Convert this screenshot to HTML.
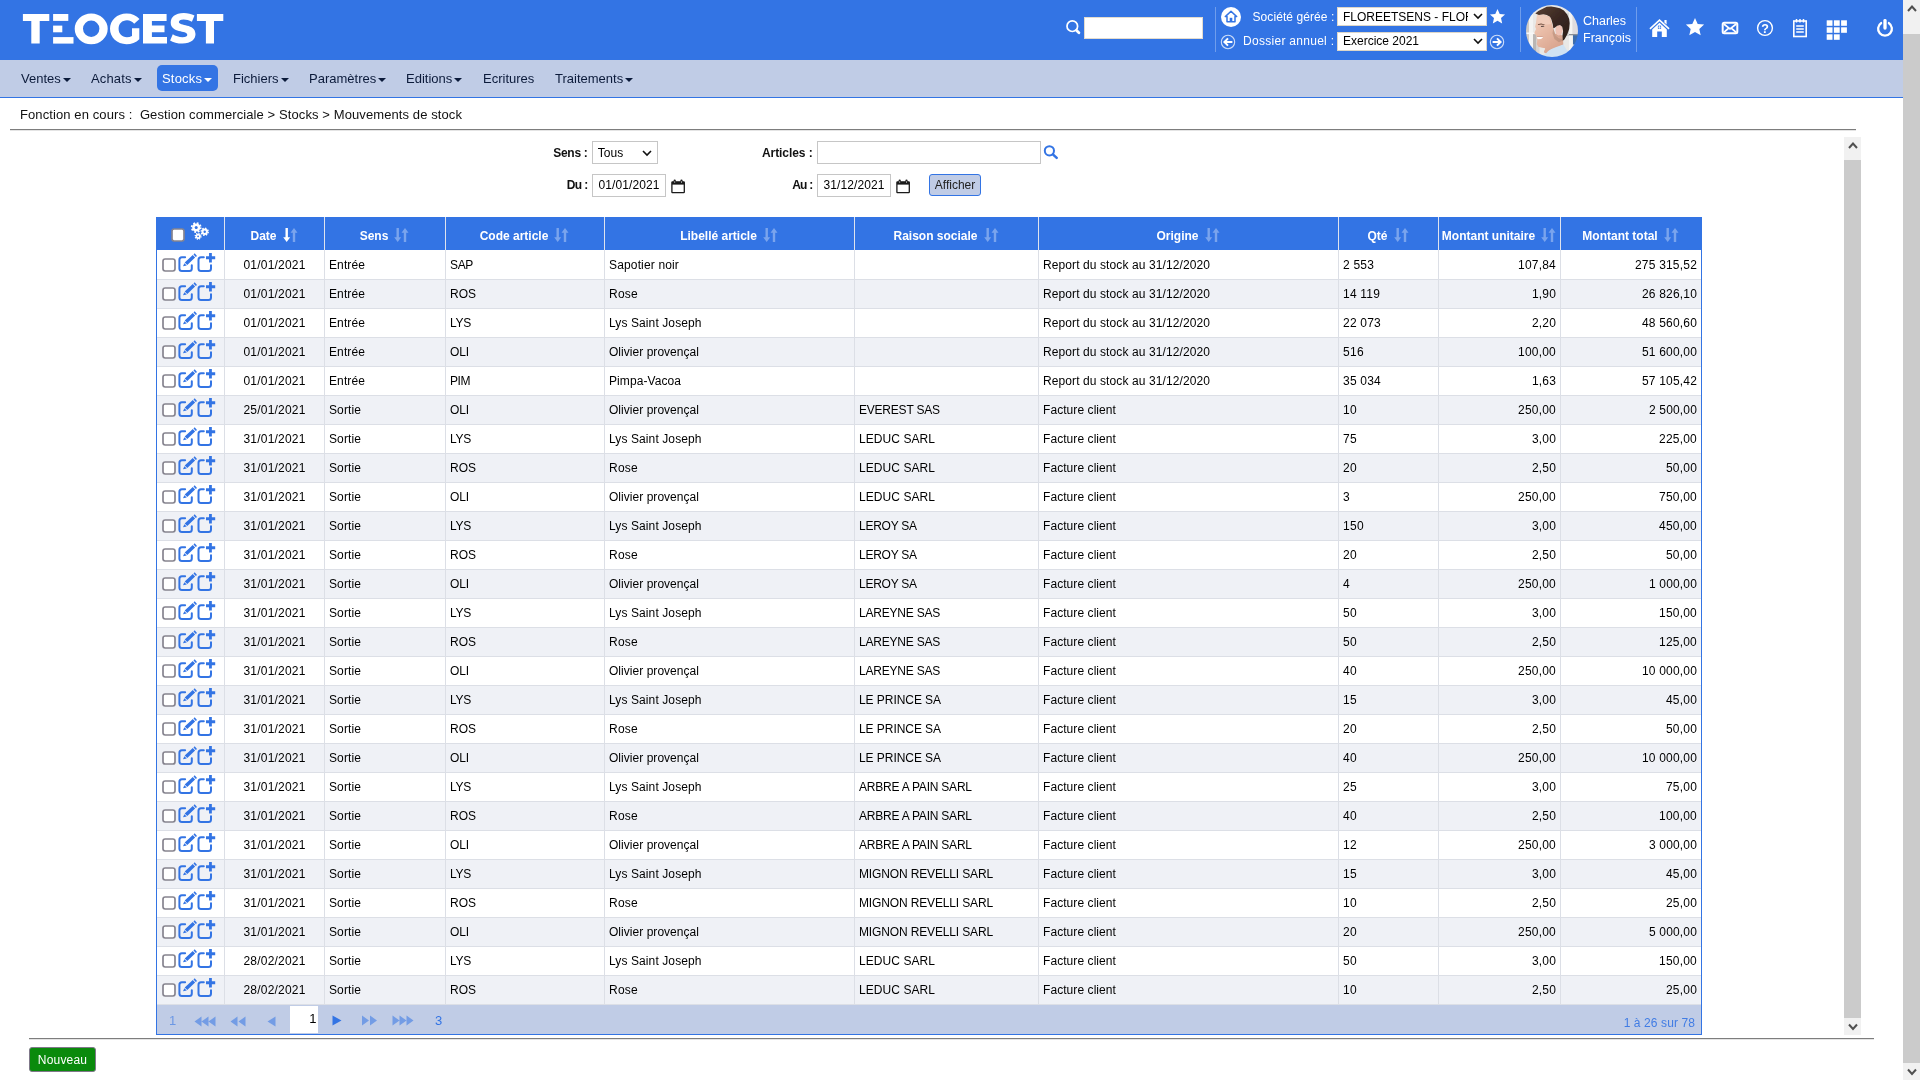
<!DOCTYPE html>
<html lang="fr"><head><meta charset="utf-8"><title>Teogest - Mouvements de stock</title>
<style>
*{box-sizing:border-box}
html,body{margin:0;padding:0}
body{width:1920px;height:1080px;overflow:hidden;position:relative;background:#fff;font-family:"Liberation Sans",sans-serif;font-size:13px;color:#000}
.abs{position:absolute}
#hdr{position:absolute;left:0;top:0;width:1903px;height:60px;background:#3374e4}
#nav{position:absolute;left:0;top:60px;width:1903px;height:38px;background:#c0cce6;border-bottom:1px solid #3374e4}
.ni{position:absolute;top:5px;height:26px;line-height:27.500px;font-size:13px;color:#0b1a3a;padding:0 6px 0 5px;border-radius:5px;white-space:nowrap}
.ni.on{background:#3374e4;color:#fff}
.car{display:inline-block;width:0;height:0;margin-left:2px;vertical-align:middle;border-top:4px solid currentColor;border-left:4px solid transparent;border-right:4px solid transparent;position:relative;top:0px}
#bc{position:absolute;left:20px;top:107px;height:16px;line-height:16px;font-size:13px;white-space:pre;color:#111;letter-spacing:.1px}
.hr{position:absolute;height:2px;border-top:1px solid #7d7d7d;border-bottom:1px solid #e4e4e4}
.lbl{position:absolute;font-size:12px;font-weight:bold;text-align:right;height:22px;line-height:23px;white-space:nowrap;color:#111;letter-spacing:0;margin-left:.6px}
.inp{position:absolute;height:23px;border:1px solid #c6c6c6;background:#fff;font-size:12px;line-height:21px;padding:0 0 0 5.500px;white-space:nowrap;color:#000;letter-spacing:.1px}
.hsel{position:absolute;height:19px;border:1px solid #ddd6c8;background:#fff;font-size:12px;line-height:17px;padding:0 0 0 5px;white-space:nowrap;overflow:hidden;color:#000;border-radius:0}
.htxt{position:absolute;color:#fff;font-size:12px;white-space:nowrap;height:16px;line-height:16px}
.vsep{position:absolute;top:7px;width:1px;height:45px;background:#6f9dec}
#grid{position:absolute;left:156px;top:217px;width:1546px;height:818px;border:1px solid #3374e4;border-top:0;background:#fff;font-size:12px}
#ghead{position:absolute;left:0;top:0;width:1544px;height:33px;background:#3374e4}
.hc{position:absolute;top:0;height:33px;border-right:1px solid #dfe3ee;color:#fff;font-weight:bold;font-size:12px;line-height:33px;text-align:center;white-space:nowrap}
.hc:last-child{border-right:0}
.ht{display:inline-block;vertical-align:top;margin-top:3px}
.srt{display:inline-block;vertical-align:top;margin:10px 0 0 6px}
.srt path{fill:#fff;fill-opacity:.35}
.srt.act .dn{fill-opacity:1}
.gr{position:absolute;left:0;width:1544px;height:29px;background:#fff;border-top:1px solid #dcdfe6}
.gr.alt{background:#eff1f6}
.gr.first{border-top-color:#fff}
.c{position:absolute;top:-1px;height:29px;line-height:30px;border-right:1px solid #dcdfe6;padding:0 4px;white-space:nowrap;overflow:hidden;text-align:left}
.c.ar{text-align:right}
.c.ac{text-align:center}
.gr .c:last-child{border-right:0}
.cb{position:absolute;width:14px;height:14px}
#pager{position:absolute;left:0;top:787px;width:1544px;height:30px;border-top:1px solid #dcdfe6;background:#c0cce6;color:#3374e4;font-size:13px}
#pager .p{position:absolute;top:0;height:29px;line-height:30px;white-space:nowrap}
#pager svg{position:absolute}
#sb2{position:absolute;left:1844px;top:137px;width:17px;height:898px;background:#f1f1f1}
#sb1{position:absolute;left:1903px;top:0;width:17px;height:1080px;background:#f1f1f1}
.thumb{position:absolute;left:0;width:17px;background:#cbcbcb}
.btn-new{position:absolute;left:29px;top:1047px;width:67px;height:25px;background:#0a8a0c;border:1px solid #80788a;border-radius:3px;color:#fff;font-size:12px;line-height:24.500px;text-align:center;letter-spacing:.2px}
.btn-aff{position:absolute;left:929px;top:174px;width:52px;height:22px;background:#c0cce6;border:1px solid #3374e4;border-radius:3px;color:#222;font-size:12px;line-height:20px;text-align:center}
.st{display:block;width:125px;overflow:hidden;white-space:nowrap}
#wrap{position:absolute;left:0;top:0;width:1920px;height:1080px;will-change:transform}

</style></head>
<body>
<div id="wrap">
<div id="hdr">
<svg class="abs" style="left:22px;top:13px" width="203" height="32" viewBox="22 13 203 32">
<g fill="#fff">
<path d="M22.9 14h26.4v6.9H39.7V43.6H31.3V20.9H22.9z"/>
<rect x="53.1" y="14" width="15.2" height="6.9"/><rect x="53.1" y="25.6" width="9.2" height="6.7"/><rect x="53.1" y="37.1" width="20.4" height="6.5"/>
<path fill-rule="evenodd" d="M91.2 13.4a16.5 15.4 0 1 0 0 30.8a16.5 15.4 0 1 0 0-30.8zM91.2 20.6a8.2 8.2 0 1 1 0 16.4a8.2 8.2 0 1 1 0-16.4z"/>
<path d="M139.3 28.3v10.9c-3.3 3.2-7.9 5-12.8 5-9.4 0-16.5-6.6-16.5-15.4s7.1-15.4 16.6-15.4c5.3 0 9.9 2 12.9 5.6l-5.3 4.7c-1.900-2.200-4.300-3.400-7.200-3.400-5 0-8.400 3.500-8.400 8.500 0 4.900 3.400 8.500 8.300 8.500 1.800 0 3.500-.4 5.100-1.300V28.300z"/>
<path d="M143 14h23.600v6.900H151.900v4.700h12.600v6.700H151.900v4.800h15.100v6.500H143z"/>
<path d="M170.100 40.400l2.700-6.100c2.600 1.700 6.300 2.900 9.700 2.900 3.400 0 4.800-1 4.800-2.400 0-4.700-16.600-1.300-16.600-12.200 0-5.300 4.300-9.600 13.100-9.600 3.800 0 7.800.9 10.700 2.600l-2.600 6.100c-2.800-1.500-5.600-2.300-8.200-2.300-3.500 0-4.800 1.200-4.800 2.700 0 4.500 16.600 1.200 16.600 12 0 5.100-4.300 9.500-13.100 9.500-4.800 0-9.600-1.300-12.300-3.200z"/>
<path d="M196.900 14h26.400v6.900H214V43.600H205.900V20.900H196.900z"/>
</g></svg>
<!-- search -->
<svg class="abs" style="left:1064px;top:19px" width="18" height="18" viewBox="0 0 18 18"><circle cx="8.300" cy="7.200" r="5.300" fill="none" stroke="#fff" stroke-width="1.700"/><path d="M12.600 11.500L14.900 13.700" stroke="#fff" stroke-width="2.800" stroke-linecap="round"/></svg>
<div class="abs" style="left:1084px;top:17px;width:119px;height:22px;background:#fff;border:1px solid #e3dccf"></div>
<div class="vsep" style="left:1215px"></div>
<svg class="abs" style="left:1220px;top:6px" width="22" height="22" viewBox="0 0 22 22"><circle cx="11" cy="11" r="10" fill="#fff"/><path d="M11 5.300L5.300 10.600h1.700v5.200h8v-5.200h1.700z" fill="none" stroke="#3374e4" stroke-width="1.500" stroke-linejoin="round"/><rect x="9.700" y="11.800" width="2.600" height="4" fill="#3374e4"/></svg>
<div class="htxt" style="left:1134.300px;width:200px;text-align:right;top:9px;letter-spacing:.07px">Société gérée :</div>
<div class="hsel" style="left:1337px;top:7px;width:150px;line-height:19px"><span class="st">FLOREETSENS - FLOREETSENS</span><svg class="abs" style="right:3px;top:5px" width="10" height="7" viewBox="0 0 10 7"><path d="M1 1l4 4 4-4" fill="none" stroke="#111" stroke-width="1.600"/></svg></div>
<svg class="abs" style="left:1489.300px;top:8.300px" width="17" height="17" viewBox="0 0 16 16"><path d="M8 1l2.100 4.700 5 .500-3.800 3.300 1.100 5L8 11.900 3.600 14.500l1.100-5L.9 6.200l5-.5z" fill="#fff"/></svg>
<svg class="abs" style="left:1220px;top:34px" width="16" height="16" viewBox="0 0 16 16"><circle cx="8" cy="8" r="6.700" fill="none" stroke="#fff" stroke-opacity=".75" stroke-width="1.100"/><path d="M12.400 8H4.800M8 4.400L4.400 8l3.600 3.600" fill="none" stroke="#fff" stroke-width="2"/></svg>
<div class="htxt" style="left:1134.300px;width:200px;text-align:right;top:33px;letter-spacing:.28px">Dossier annuel :</div>
<div class="hsel" style="left:1337px;top:32px;width:150px"><span class="st">Exercice 2021</span><svg class="abs" style="right:3px;top:5px" width="10" height="7" viewBox="0 0 10 7"><path d="M1 1l4 4 4-4" fill="none" stroke="#111" stroke-width="1.600"/></svg></div>
<svg class="abs" style="left:1489px;top:34px" width="16" height="16" viewBox="0 0 16 16"><circle cx="8" cy="8" r="6.700" fill="none" stroke="#fff" stroke-opacity=".75" stroke-width="1.100"/><path d="M3.600 8h7.600M8 4.400L11.600 8l-3.600 3.600" fill="none" stroke="#fff" stroke-width="2"/></svg>
<div class="vsep" style="left:1520px"></div>
<!-- avatar -->
<svg class="abs" style="left:1526px;top:5px" width="52" height="52" viewBox="0 0 52 52"><defs><clipPath id="av"><circle cx="26" cy="26" r="26"/></clipPath><filter id="bl" x="-10%" y="-10%" width="120%" height="120%"><feGaussianBlur stdDeviation="0.65"/></filter><linearGradient id="gh" x1="0" y1="0" x2="1" y2="1"><stop offset="0" stop-color="#5a4134"/><stop offset=".5" stop-color="#3a2822"/><stop offset="1" stop-color="#2b1e1b"/></linearGradient><linearGradient id="gf" x1="0" y1="0" x2=".6" y2="1"><stop offset="0" stop-color="#f3d2c0"/><stop offset=".45" stop-color="#e9bca7"/><stop offset="1" stop-color="#d9a48e"/></linearGradient></defs><g clip-path="url(#av)"><g filter="url(#bl)"><rect x="-2" y="-2" width="56" height="56" fill="#e9e8e6"/><rect x="0" y="0" width="3.500" height="56" fill="#cfcac4"/><rect x="3" y="0" width="4" height="56" fill="#f3f3f2"/><rect x="7" y="29" width="3.500" height="26" fill="#b9b6b4"/><rect x="10.500" y="29" width="3" height="26" fill="#d8d3d2"/><rect x="0" y="27.500" width="10" height="1.600" fill="#f8f8f8"/><rect x="43" y="0" width="3.500" height="56" fill="#f4f4f3"/><rect x="46.500" y="0" width="6" height="29" fill="#dfdcde"/><rect x="47" y="29.500" width="6" height="10" fill="#3d6cab"/><rect x="38" y="29" width="14" height="1.300" fill="#8a8f96"/><rect x="40" y="8" width="3" height="22" fill="#d9dad8"/><path d="M27.3 28.3L36.8 30.6L37.3 39.4L27.3 43.3L20.1 48.6L17.9 47.2L19.6 42.8z" fill="#d7a48e"/><path d="M17.9 50.6L20.1 47.2L26.8 42.8L37.1 38.9L40.1 43.9L42.9 47.2L36.2 52.8L21.8 52.8z" fill="#cfe2f3"/><path d="M10.9 10.0L17.3 9.2L24.0 11.7L27.3 23.3L29.6 30.6L36.5 33.9L37.1 39.4L29.6 42.2L22.9 45.0L20.1 48.3L18.4 46.7L19.3 43.3L16.2 42.7L12.3 41.7L10.7 38.9L11.3 35.6L10.6 33.3L10.7 31.7L9.8 30.1L8.3 28.3L8.6 26.9L10.1 23.9L9.1 21.7L10.1 17.2z" fill="url(#gf)"/><path d="M11.8 11.1L17.9 10.3L22.9 12.8L25.1 18.9L20.7 19.4L10.7 18.3z" fill="#f1cdbb"/><path d="M30.1 21.1L34.0 20.0L36.3 21.7L36.8 26.1L35.1 30.0L32.3 30.6L30.1 28.9L29.3 25.0z" fill="#efc3b6"/><path d="M27.3 23.3L29.6 30.6L32.9 33.3L36.5 33.9L36.8 35.8L32.9 37.2L28.4 33.9L26.5 28.3z" fill="#b08874" fill-opacity=".55"/><path d="M9.3 8.6L12.3 6.1L16.2 3.9L20.7 1.7L25.1 1.6L29.6 2.2L34.0 3.3L37.9 5.6L41.2 9.4L43.2 13.9L43.7 18.3L43.2 23.9L41.2 29.4L38.4 34.4L36.8 35.8L36.5 30.6L37.1 26.1L36.2 21.7L34.0 20.0L31.2 20.8L28.7 22.8L27.3 23.3L26.8 19.4L25.4 14.4L24.0 11.7L20.7 10.0L17.3 9.2L12.9 9.9z" fill="url(#gh)"/><path d="M10.9 32.1L16.2 31.4L17.1 32.2L15.1 33.9L11.5 34.3z" fill="#fdfdfd"/><path d="M11.8 19.3L15.1 18.6L18.7 19.4L18.4 20.1L15.1 19.6L12.1 20.1z" fill="#6b4a3c"/><path d="M14.8 21.0L17.9 20.7L18.4 21.6L15.4 22.0z" fill="#4a3a38"/><path d="M10.7 31.4L16.2 31.0L17.3 31.8L16.2 31.7L10.9 32.1z" fill="#c98f7c"/></g></g></svg>
<div class="htxt" style="left:1583px;top:13px;font-size:12.500px">Charles</div>
<div class="htxt" style="left:1583px;top:30px;font-size:12.500px">François</div>
<div class="vsep" style="left:1636px"></div>
<!-- icons -->
<svg class="abs" style="left:1649px;top:18px" width="21" height="20" viewBox="0 0 21 20"><path d="M10.500 1L0.400 10.300l1.100 1.200L10.500 3.300l9 8.200 1.100-1.200z" fill="#fff"/><path d="M15.400 2h2.200v4.600l-2.200-2z" fill="#fff"/><path d="M3.200 11.400L10.500 4.700l7.300 6.700V19h-5v-5.400H8.200V19H3.200z" fill="#fff"/><rect x="8.900" y="7.600" width="3.200" height="3.200" fill="#3374e4"/><path d="M10.500 7.600v3.200M8.900 9.200h3.200" stroke="#fff" stroke-width=".7"/></svg>
<svg class="abs" style="left:1685px;top:17px" width="20" height="20" viewBox="0 0 20 20"><path d="M10 1l2.700 6 6.400.6-4.800 4.300 1.400 6.400L10 15l-5.700 3.300 1.400-6.400L.9 7.600l6.400-.6z" fill="#fff"/></svg>
<svg class="abs" style="left:1721px;top:21px" width="18" height="14" viewBox="0 0 18 14"><rect x="1.700" y="1.700" width="14.600" height="10.600" rx="1.500" fill="none" stroke="#fff" stroke-width="2"/><path d="M2.800 3l6.200 5 6.200-5M2.800 11.300l4.500-3.800M15.200 11.300l-4.500-3.800" fill="none" stroke="#fff" stroke-width="1.700"/></svg>
<svg class="abs" style="left:1756px;top:19px" width="18" height="18" viewBox="0 0 18 18"><circle cx="9" cy="9" r="7.400" fill="none" stroke="#fff" stroke-width="1.400"/><text x="9" y="13.500" text-anchor="middle" font-family="Liberation Sans" font-weight="bold" font-size="12.500" fill="#fff">?</text></svg>
<svg class="abs" style="left:1792px;top:18px" width="16" height="20" viewBox="0 0 16 20"><rect x="1.800" y="3" width="12.400" height="15.500" fill="none" stroke="#fff" stroke-width="1.600"/><path d="M4.500 1v3.400M8 1v3.400M11.500 1v3.400" stroke="#fff" stroke-width="1.500"/><path d="M4.200 8h7.600M4.200 11h7.600M4.200 14h7.600" stroke="#fff" stroke-width="1.500"/></svg>
<svg class="abs" style="left:1826px;top:20px" width="22" height="21" viewBox="0 0 22 21"><g fill="#fff"><rect x="0.700" y="0.300" width="5.800" height="5.500"/><rect x="7.900" y="0.300" width="5.800" height="5.500"/><rect x="15.100" y="0.300" width="5.800" height="5.500"/><rect x="0.700" y="7.300" width="5.800" height="5.500"/><rect x="7.900" y="7.300" width="5.800" height="5.500"/><rect x="15.100" y="7.300" width="5.800" height="5.500"/><rect x="0.700" y="14.300" width="5.800" height="5.500"/><rect x="7.900" y="14.300" width="5.800" height="5.500"/></g></svg>
<svg class="abs" style="left:1876px;top:19px" width="18" height="19" viewBox="0 0 18 19"><path d="M5.300 4A6.900 6.900 0 1 0 12.700 4" fill="none" stroke="#fff" stroke-width="2.300" stroke-linecap="round"/><path d="M9 1.600v7.400" stroke="#3374e4" stroke-width="5.200" stroke-linecap="round"/><path d="M9 1.600v7.400" stroke="#fff" stroke-width="3.300" stroke-linecap="round"/></svg>
</div>
<div id="nav">
<div class="ni" style="left:16px">Ventes<i class="car"></i></div>
<div class="ni" style="left:86px;letter-spacing:.15px">Achats<i class="car"></i></div>
<div class="ni on" style="left:157px;letter-spacing:.2px">Stocks<i class="car"></i></div>
<div class="ni" style="left:228px">Fichiers<i class="car"></i></div>
<div class="ni" style="left:304px">Paramètres<i class="car"></i></div>
<div class="ni" style="left:401px">Editions<i class="car"></i></div>
<div class="ni" style="left:478px">Ecritures</div>
<div class="ni" style="left:550px">Traitements<i class="car"></i></div>
</div>
<div id="bc">Fonction en cours :  Gestion commerciale &gt; Stocks &gt; Mouvements de stock</div>
<div class="hr" style="left:10px;top:129px;width:1846px"></div>
<!-- filters -->
<div class="lbl" style="left:487px;width:100px;top:142px;letter-spacing:-.28px">Sens :</div>
<div class="inp" style="left:592px;top:141px;width:66px;line-height:23px;letter-spacing:0;padding-left:4.800px">Tous<svg class="abs" style="right:5px;top:8px" width="10" height="7" viewBox="0 0 10 7"><path d="M1 1l4 4 4-4" fill="none" stroke="#111" stroke-width="1.600"/></svg></div>
<div class="lbl" style="left:712px;width:100px;top:142px;letter-spacing:-.07px">Articles :</div>
<div class="inp" style="left:817px;top:141px;width:224px"></div>
<svg class="abs" style="left:1043px;top:144px" width="16" height="17" viewBox="0 0 16 17"><circle cx="6.400" cy="6.800" r="4.600" fill="none" stroke="#3374e4" stroke-width="2"/><path d="M9.900 10.300L13.700 13.900" stroke="#3374e4" stroke-width="2.500" stroke-linecap="round"/></svg>
<div class="lbl" style="left:487px;width:100px;top:174px;letter-spacing:-.6px">Du :</div>
<div class="inp" style="left:592px;top:174px;width:74px">01/01/2021</div>
<svg class="abs cal" style="left:670px;top:177.600px" width="16" height="16" viewBox="0 0 16 16"><rect x="1.900" y="3.900" width="12.400" height="10.800" rx=".6" fill="#fff" stroke="#1a1a1a" stroke-width="1.300"/><rect x="1.900" y="3.900" width="12.400" height="2.700" fill="#1a1a1a"/><path d="M4.700 2.600v2M11.500 2.600v2" stroke="#1a1a1a" stroke-width="2.200" stroke-linecap="round"/><path d="M4.700 3.300v1.500M11.500 3.300v1.500" stroke="#ddd" stroke-width=".8"/></svg>
<div class="lbl" style="left:712px;width:100px;top:174px;letter-spacing:-.73px">Au :</div>
<div class="inp" style="left:817px;top:174px;width:74px">31/12/2021</div>
<svg class="abs cal" style="left:895px;top:177.600px" width="16" height="16" viewBox="0 0 16 16"><rect x="1.900" y="3.900" width="12.400" height="10.800" rx=".6" fill="#fff" stroke="#1a1a1a" stroke-width="1.300"/><rect x="1.900" y="3.900" width="12.400" height="2.700" fill="#1a1a1a"/><path d="M4.700 2.600v2M11.500 2.600v2" stroke="#1a1a1a" stroke-width="2.200" stroke-linecap="round"/><path d="M4.700 3.300v1.500M11.500 3.300v1.500" stroke="#ddd" stroke-width=".8"/></svg>
<div class="btn-aff">Afficher</div>
<div id="grid">
<div id="ghead">
<div class="hc" style="left:0;width:68px"><svg class="cb" style="left:14.200px;top:11.200px" viewBox="0 0 14 14"><rect x="1" y="1" width="12" height="12" rx="2.200" fill="#fff" stroke="#86848f" stroke-width="1.700"/></svg><svg class="abs" style="left:32.300px;top:3.200px" width="20" height="20" viewBox="0 0 20 20"><g fill="#fff" stroke="#fff"><circle cx="7.200" cy="7.500" r="4" stroke="none"/><circle cx="7.200" cy="7.500" r="4.500" fill="none" stroke-width="1.800" stroke-dasharray="1.770 1.770"/><circle cx="15.700" cy="11.800" r="3.200" stroke="none"/><circle cx="15.700" cy="11.800" r="3.500" fill="none" stroke-width="1.500" stroke-dasharray="1.370 1.370"/><circle cx="9.100" cy="16.300" r="2.600" stroke="none"/><circle cx="9.100" cy="16.300" r="2.900" fill="none" stroke-width="1.300" stroke-dasharray="1.140 1.140"/></g><circle cx="7.200" cy="7.500" r="1.500" fill="#3374e4"/><circle cx="15.700" cy="11.800" r="1.200" fill="#3374e4"/><circle cx="9.100" cy="16.300" r="0.900" fill="#3374e4"/></svg></div>
<div class="hc" style="left:68px;width:100px"><span class="ht">Date</span><svg class="srt act" width="16" height="16" viewBox="0 0 16 16"><path class="dn" d="M2.5 1h2.4v9.2h2.3L3.7 15 0.2 10.2h2.3z"/><path class="up" d="M9.800 15h2.400V5.800h2.300L11 1 7.500 5.800h2.300z"/></svg></div>
<div class="hc" style="left:168px;width:121px"><span class="ht">Sens</span><svg class="srt" width="16" height="16" viewBox="0 0 16 16"><path class="dn" d="M2.5 1h2.4v9.2h2.3L3.7 15 0.2 10.2h2.3z"/><path class="up" d="M9.800 15h2.400V5.800h2.300L11 1 7.500 5.800h2.300z"/></svg></div>
<div class="hc" style="left:289px;width:159px"><span class="ht">Code article</span><svg class="srt" width="16" height="16" viewBox="0 0 16 16"><path class="dn" d="M2.5 1h2.4v9.2h2.3L3.7 15 0.2 10.2h2.3z"/><path class="up" d="M9.800 15h2.400V5.800h2.300L11 1 7.500 5.800h2.300z"/></svg></div>
<div class="hc" style="left:448px;width:250px"><span class="ht">Libellé article</span><svg class="srt" width="16" height="16" viewBox="0 0 16 16"><path class="dn" d="M2.5 1h2.4v9.2h2.3L3.7 15 0.2 10.2h2.3z"/><path class="up" d="M9.800 15h2.400V5.800h2.300L11 1 7.500 5.800h2.300z"/></svg></div>
<div class="hc" style="left:698px;width:184px"><span class="ht">Raison sociale</span><svg class="srt" width="16" height="16" viewBox="0 0 16 16"><path class="dn" d="M2.5 1h2.4v9.2h2.3L3.7 15 0.2 10.2h2.3z"/><path class="up" d="M9.800 15h2.400V5.800h2.300L11 1 7.500 5.800h2.300z"/></svg></div>
<div class="hc" style="left:882px;width:300px"><span class="ht">Origine</span><svg class="srt" width="16" height="16" viewBox="0 0 16 16"><path class="dn" d="M2.5 1h2.4v9.2h2.3L3.7 15 0.2 10.2h2.3z"/><path class="up" d="M9.800 15h2.400V5.800h2.300L11 1 7.500 5.800h2.300z"/></svg></div>
<div class="hc" style="left:1182px;width:100px"><span class="ht">Qté</span><svg class="srt" width="16" height="16" viewBox="0 0 16 16"><path class="dn" d="M2.5 1h2.4v9.2h2.3L3.7 15 0.2 10.2h2.3z"/><path class="up" d="M9.800 15h2.400V5.800h2.300L11 1 7.500 5.800h2.300z"/></svg></div>
<div class="hc" style="left:1282px;width:122px"><span class="ht">Montant unitaire</span><svg class="srt" width="16" height="16" viewBox="0 0 16 16"><path class="dn" d="M2.5 1h2.4v9.2h2.3L3.7 15 0.2 10.2h2.3z"/><path class="up" d="M9.800 15h2.400V5.800h2.300L11 1 7.500 5.800h2.300z"/></svg></div>
<div class="hc" style="left:1404px;width:140px"><span class="ht">Montant total</span><svg class="srt" width="16" height="16" viewBox="0 0 16 16"><path class="dn" d="M2.5 1h2.4v9.2h2.3L3.7 15 0.2 10.2h2.3z"/><path class="up" d="M9.800 15h2.400V5.800h2.300L11 1 7.500 5.800h2.300z"/></svg></div>
</div>
<div class="gr first" style="top:33px">
<div class="c" style="left:0;width:68px"><svg class="cb" style="left:5.150px;top:8.100px" viewBox="0 0 14 14"><rect x="1" y="1" width="12" height="12" rx="2.200" fill="#fff" stroke="#86848f" stroke-width="1.700"/></svg><svg class="abs" style="left:21px;top:2px" width="20" height="21" viewBox="0 0 20 21"><path d="M7.100 5.200H3.900a2.500 2.500 0 0 0-2.500 2.500v8.700a2.500 2.500 0 0 0 2.500 2.500h7.400a2.500 2.500 0 0 0 2.500-2.500v-3.200" fill="none" stroke="#3374e4" stroke-width="2" stroke-linecap="round"/><path d="M6.700 10.500L14.800 3l2.300 2.600-7.800 7.500zM6.400 11.200l2.400 2.400-3.800.6zM15.500 2.400l1.200-1.100 2.300 2.600-1.200 1.100z" fill="#3374e4"/></svg><svg class="abs" style="left:40px;top:2px" width="20" height="21" viewBox="0 0 20 21"><path d="M6.800 5.200H4a2.500 2.500 0 0 0-2.500 2.500v8.700a2.500 2.500 0 0 0 2.500 2.500h7.500a2.500 2.500 0 0 0 2.500-2.500v-3.200" fill="none" stroke="#3374e4" stroke-width="2" stroke-linecap="round"/><path d="M9 5.750h9.200M13.450 0.900v9.600" stroke="#3374e4" stroke-width="2.800" fill="none"/></svg></div>
<div class="c ac" style="left:68px;width:100px"><span style="letter-spacing:0.194px">01/01/2021</span></div>
<div class="c al" style="left:168px;width:121px"><span style="letter-spacing:0.107px">Entrée</span></div>
<div class="c al" style="left:289px;width:159px"><span style="letter-spacing:-0.337px">SAP</span></div>
<div class="c al" style="left:448px;width:250px"><span style="letter-spacing:0.151px">Sapotier noir</span></div>
<div class="c al" style="left:698px;width:184px"></div>
<div class="c al" style="left:882px;width:300px"><span style="letter-spacing:0.099px">Report du stock au 31/12/2020</span></div>
<div class="c al" style="left:1182px;width:100px"><span style="letter-spacing:0.194px">2 553</span></div>
<div class="c ar" style="left:1282px;width:122px"><span style="letter-spacing:0.216px">107,84</span></div>
<div class="c ar" style="left:1404px;width:140px"><span style="letter-spacing:0.194px">275 315,52</span></div>
</div>
<div class="gr alt" style="top:62px">
<div class="c" style="left:0;width:68px"><svg class="cb" style="left:5.150px;top:8.100px" viewBox="0 0 14 14"><rect x="1" y="1" width="12" height="12" rx="2.200" fill="#fff" stroke="#86848f" stroke-width="1.700"/></svg><svg class="abs" style="left:21px;top:2px" width="20" height="21" viewBox="0 0 20 21"><path d="M7.100 5.200H3.900a2.500 2.500 0 0 0-2.500 2.500v8.700a2.500 2.500 0 0 0 2.500 2.500h7.400a2.500 2.500 0 0 0 2.500-2.500v-3.200" fill="none" stroke="#3374e4" stroke-width="2" stroke-linecap="round"/><path d="M6.700 10.500L14.800 3l2.300 2.600-7.800 7.500zM6.400 11.200l2.400 2.400-3.800.6zM15.500 2.400l1.200-1.100 2.300 2.600-1.200 1.100z" fill="#3374e4"/></svg><svg class="abs" style="left:40px;top:2px" width="20" height="21" viewBox="0 0 20 21"><path d="M6.800 5.200H4a2.500 2.500 0 0 0-2.500 2.500v8.700a2.500 2.500 0 0 0 2.500 2.500h7.500a2.500 2.500 0 0 0 2.500-2.500v-3.200" fill="none" stroke="#3374e4" stroke-width="2" stroke-linecap="round"/><path d="M9 5.750h9.200M13.450 0.900v9.600" stroke="#3374e4" stroke-width="2.800" fill="none"/></svg></div>
<div class="c ac" style="left:68px;width:100px"><span style="letter-spacing:0.194px">01/01/2021</span></div>
<div class="c al" style="left:168px;width:121px"><span style="letter-spacing:0.107px">Entrée</span></div>
<div class="c al" style="left:289px;width:159px">ROS</div>
<div class="c al" style="left:448px;width:250px"><span style="letter-spacing:0.247px">Rose</span></div>
<div class="c al" style="left:698px;width:184px"></div>
<div class="c al" style="left:882px;width:300px"><span style="letter-spacing:0.099px">Report du stock au 31/12/2020</span></div>
<div class="c al" style="left:1182px;width:100px"><span style="letter-spacing:0.216px">14 119</span></div>
<div class="c ar" style="left:1282px;width:122px"><span style="letter-spacing:0.161px">1,90</span></div>
<div class="c ar" style="left:1404px;width:140px"><span style="letter-spacing:0.179px">26 826,10</span></div>
</div>
<div class="gr" style="top:91px">
<div class="c" style="left:0;width:68px"><svg class="cb" style="left:5.150px;top:8.100px" viewBox="0 0 14 14"><rect x="1" y="1" width="12" height="12" rx="2.200" fill="#fff" stroke="#86848f" stroke-width="1.700"/></svg><svg class="abs" style="left:21px;top:2px" width="20" height="21" viewBox="0 0 20 21"><path d="M7.100 5.200H3.900a2.500 2.500 0 0 0-2.500 2.500v8.700a2.500 2.500 0 0 0 2.500 2.500h7.400a2.500 2.500 0 0 0 2.500-2.500v-3.200" fill="none" stroke="#3374e4" stroke-width="2" stroke-linecap="round"/><path d="M6.700 10.500L14.800 3l2.300 2.600-7.800 7.500zM6.400 11.200l2.400 2.400-3.800.6zM15.500 2.400l1.200-1.100 2.300 2.600-1.200 1.100z" fill="#3374e4"/></svg><svg class="abs" style="left:40px;top:2px" width="20" height="21" viewBox="0 0 20 21"><path d="M6.800 5.200H4a2.500 2.500 0 0 0-2.500 2.500v8.700a2.500 2.500 0 0 0 2.500 2.500h7.500a2.500 2.500 0 0 0 2.500-2.500v-3.200" fill="none" stroke="#3374e4" stroke-width="2" stroke-linecap="round"/><path d="M9 5.750h9.200M13.450 0.900v9.600" stroke="#3374e4" stroke-width="2.800" fill="none"/></svg></div>
<div class="c ac" style="left:68px;width:100px"><span style="letter-spacing:0.194px">01/01/2021</span></div>
<div class="c al" style="left:168px;width:121px"><span style="letter-spacing:0.107px">Entrée</span></div>
<div class="c al" style="left:289px;width:159px"><span style="letter-spacing:-0.227px">LYS</span></div>
<div class="c al" style="left:448px;width:250px"><span style="letter-spacing:0.101px">Lys Saint Joseph</span></div>
<div class="c al" style="left:698px;width:184px"></div>
<div class="c al" style="left:882px;width:300px"><span style="letter-spacing:0.099px">Report du stock au 31/12/2020</span></div>
<div class="c al" style="left:1182px;width:100px"><span style="letter-spacing:0.216px">22 073</span></div>
<div class="c ar" style="left:1282px;width:122px"><span style="letter-spacing:0.161px">2,20</span></div>
<div class="c ar" style="left:1404px;width:140px"><span style="letter-spacing:0.179px">48 560,60</span></div>
</div>
<div class="gr alt" style="top:120px">
<div class="c" style="left:0;width:68px"><svg class="cb" style="left:5.150px;top:8.100px" viewBox="0 0 14 14"><rect x="1" y="1" width="12" height="12" rx="2.200" fill="#fff" stroke="#86848f" stroke-width="1.700"/></svg><svg class="abs" style="left:21px;top:2px" width="20" height="21" viewBox="0 0 20 21"><path d="M7.100 5.200H3.900a2.500 2.500 0 0 0-2.500 2.500v8.700a2.500 2.500 0 0 0 2.500 2.500h7.400a2.500 2.500 0 0 0 2.500-2.500v-3.200" fill="none" stroke="#3374e4" stroke-width="2" stroke-linecap="round"/><path d="M6.700 10.500L14.800 3l2.300 2.600-7.800 7.500zM6.400 11.200l2.400 2.400-3.800.6zM15.500 2.400l1.200-1.100 2.300 2.600-1.200 1.100z" fill="#3374e4"/></svg><svg class="abs" style="left:40px;top:2px" width="20" height="21" viewBox="0 0 20 21"><path d="M6.800 5.200H4a2.500 2.500 0 0 0-2.500 2.500v8.700a2.500 2.500 0 0 0 2.500 2.500h7.500a2.500 2.500 0 0 0 2.500-2.500v-3.200" fill="none" stroke="#3374e4" stroke-width="2" stroke-linecap="round"/><path d="M9 5.750h9.200M13.450 0.900v9.600" stroke="#3374e4" stroke-width="2.800" fill="none"/></svg></div>
<div class="c ac" style="left:68px;width:100px"><span style="letter-spacing:0.194px">01/01/2021</span></div>
<div class="c al" style="left:168px;width:121px"><span style="letter-spacing:0.107px">Entrée</span></div>
<div class="c al" style="left:289px;width:159px"><span style="letter-spacing:-0.114px">OLI</span></div>
<div class="c al" style="left:448px;width:250px"><span style="letter-spacing:0.037px">Olivier provençal</span></div>
<div class="c al" style="left:698px;width:184px"></div>
<div class="c al" style="left:882px;width:300px"><span style="letter-spacing:0.099px">Report du stock au 31/12/2020</span></div>
<div class="c al" style="left:1182px;width:100px"><span style="letter-spacing:0.326px">516</span></div>
<div class="c ar" style="left:1282px;width:122px"><span style="letter-spacing:0.216px">100,00</span></div>
<div class="c ar" style="left:1404px;width:140px"><span style="letter-spacing:0.179px">51 600,00</span></div>
</div>
<div class="gr" style="top:149px">
<div class="c" style="left:0;width:68px"><svg class="cb" style="left:5.150px;top:8.100px" viewBox="0 0 14 14"><rect x="1" y="1" width="12" height="12" rx="2.200" fill="#fff" stroke="#86848f" stroke-width="1.700"/></svg><svg class="abs" style="left:21px;top:2px" width="20" height="21" viewBox="0 0 20 21"><path d="M7.100 5.200H3.900a2.500 2.500 0 0 0-2.500 2.500v8.700a2.500 2.500 0 0 0 2.500 2.500h7.400a2.500 2.500 0 0 0 2.500-2.500v-3.200" fill="none" stroke="#3374e4" stroke-width="2" stroke-linecap="round"/><path d="M6.700 10.500L14.800 3l2.300 2.600-7.800 7.500zM6.400 11.200l2.400 2.400-3.800.6zM15.500 2.400l1.200-1.100 2.300 2.600-1.200 1.100z" fill="#3374e4"/></svg><svg class="abs" style="left:40px;top:2px" width="20" height="21" viewBox="0 0 20 21"><path d="M6.800 5.200H4a2.500 2.500 0 0 0-2.500 2.500v8.700a2.500 2.500 0 0 0 2.500 2.500h7.500a2.500 2.500 0 0 0 2.500-2.500v-3.200" fill="none" stroke="#3374e4" stroke-width="2" stroke-linecap="round"/><path d="M9 5.750h9.200M13.450 0.900v9.600" stroke="#3374e4" stroke-width="2.800" fill="none"/></svg></div>
<div class="c ac" style="left:68px;width:100px"><span style="letter-spacing:0.194px">01/01/2021</span></div>
<div class="c al" style="left:168px;width:121px"><span style="letter-spacing:0.107px">Entrée</span></div>
<div class="c al" style="left:289px;width:159px"><span style="letter-spacing:-0.445px">PIM</span></div>
<div class="c al" style="left:448px;width:250px"><span style="letter-spacing:0.088px">Pimpa-Vacoa</span></div>
<div class="c al" style="left:698px;width:184px"></div>
<div class="c al" style="left:882px;width:300px"><span style="letter-spacing:0.099px">Report du stock au 31/12/2020</span></div>
<div class="c al" style="left:1182px;width:100px"><span style="letter-spacing:0.216px">35 034</span></div>
<div class="c ar" style="left:1282px;width:122px"><span style="letter-spacing:0.161px">1,63</span></div>
<div class="c ar" style="left:1404px;width:140px"><span style="letter-spacing:0.179px">57 105,42</span></div>
</div>
<div class="gr alt" style="top:178px">
<div class="c" style="left:0;width:68px"><svg class="cb" style="left:5.150px;top:8.100px" viewBox="0 0 14 14"><rect x="1" y="1" width="12" height="12" rx="2.200" fill="#fff" stroke="#86848f" stroke-width="1.700"/></svg><svg class="abs" style="left:21px;top:2px" width="20" height="21" viewBox="0 0 20 21"><path d="M7.100 5.200H3.900a2.500 2.500 0 0 0-2.500 2.500v8.700a2.500 2.500 0 0 0 2.500 2.500h7.400a2.500 2.500 0 0 0 2.500-2.500v-3.200" fill="none" stroke="#3374e4" stroke-width="2" stroke-linecap="round"/><path d="M6.700 10.500L14.800 3l2.300 2.600-7.800 7.500zM6.400 11.200l2.400 2.400-3.800.6zM15.500 2.400l1.200-1.100 2.300 2.600-1.200 1.100z" fill="#3374e4"/></svg><svg class="abs" style="left:40px;top:2px" width="20" height="21" viewBox="0 0 20 21"><path d="M6.800 5.200H4a2.500 2.500 0 0 0-2.500 2.500v8.700a2.500 2.500 0 0 0 2.500 2.500h7.500a2.500 2.500 0 0 0 2.500-2.500v-3.200" fill="none" stroke="#3374e4" stroke-width="2" stroke-linecap="round"/><path d="M9 5.750h9.200M13.450 0.900v9.600" stroke="#3374e4" stroke-width="2.800" fill="none"/></svg></div>
<div class="c ac" style="left:68px;width:100px"><span style="letter-spacing:0.194px">25/01/2021</span></div>
<div class="c al" style="left:168px;width:121px"><span style="letter-spacing:0.109px">Sortie</span></div>
<div class="c al" style="left:289px;width:159px"><span style="letter-spacing:-0.114px">OLI</span></div>
<div class="c al" style="left:448px;width:250px"><span style="letter-spacing:0.037px">Olivier provençal</span></div>
<div class="c al" style="left:698px;width:184px"><span style="letter-spacing:-0.215px">EVEREST SAS</span></div>
<div class="c al" style="left:882px;width:300px"><span style="letter-spacing:0.069px">Facture client</span></div>
<div class="c al" style="left:1182px;width:100px"><span style="letter-spacing:0.326px">10</span></div>
<div class="c ar" style="left:1282px;width:122px"><span style="letter-spacing:0.216px">250,00</span></div>
<div class="c ar" style="left:1404px;width:140px"><span style="letter-spacing:0.161px">2 500,00</span></div>
</div>
<div class="gr" style="top:207px">
<div class="c" style="left:0;width:68px"><svg class="cb" style="left:5.150px;top:8.100px" viewBox="0 0 14 14"><rect x="1" y="1" width="12" height="12" rx="2.200" fill="#fff" stroke="#86848f" stroke-width="1.700"/></svg><svg class="abs" style="left:21px;top:2px" width="20" height="21" viewBox="0 0 20 21"><path d="M7.100 5.200H3.900a2.500 2.500 0 0 0-2.500 2.500v8.700a2.500 2.500 0 0 0 2.500 2.500h7.400a2.500 2.500 0 0 0 2.500-2.500v-3.200" fill="none" stroke="#3374e4" stroke-width="2" stroke-linecap="round"/><path d="M6.700 10.500L14.800 3l2.300 2.600-7.800 7.500zM6.400 11.200l2.400 2.400-3.800.6zM15.500 2.400l1.200-1.100 2.300 2.600-1.200 1.100z" fill="#3374e4"/></svg><svg class="abs" style="left:40px;top:2px" width="20" height="21" viewBox="0 0 20 21"><path d="M6.800 5.200H4a2.500 2.500 0 0 0-2.500 2.500v8.700a2.500 2.500 0 0 0 2.500 2.500h7.500a2.500 2.500 0 0 0 2.500-2.500v-3.200" fill="none" stroke="#3374e4" stroke-width="2" stroke-linecap="round"/><path d="M9 5.750h9.200M13.450 0.900v9.600" stroke="#3374e4" stroke-width="2.800" fill="none"/></svg></div>
<div class="c ac" style="left:68px;width:100px"><span style="letter-spacing:0.194px">31/01/2021</span></div>
<div class="c al" style="left:168px;width:121px"><span style="letter-spacing:0.109px">Sortie</span></div>
<div class="c al" style="left:289px;width:159px"><span style="letter-spacing:-0.227px">LYS</span></div>
<div class="c al" style="left:448px;width:250px"><span style="letter-spacing:0.101px">Lys Saint Joseph</span></div>
<div class="c al" style="left:698px;width:184px"><span style="letter-spacing:0.064px">LEDUC SARL</span></div>
<div class="c al" style="left:882px;width:300px"><span style="letter-spacing:0.069px">Facture client</span></div>
<div class="c al" style="left:1182px;width:100px"><span style="letter-spacing:0.326px">75</span></div>
<div class="c ar" style="left:1282px;width:122px"><span style="letter-spacing:0.161px">3,00</span></div>
<div class="c ar" style="left:1404px;width:140px"><span style="letter-spacing:0.216px">225,00</span></div>
</div>
<div class="gr alt" style="top:236px">
<div class="c" style="left:0;width:68px"><svg class="cb" style="left:5.150px;top:8.100px" viewBox="0 0 14 14"><rect x="1" y="1" width="12" height="12" rx="2.200" fill="#fff" stroke="#86848f" stroke-width="1.700"/></svg><svg class="abs" style="left:21px;top:2px" width="20" height="21" viewBox="0 0 20 21"><path d="M7.100 5.200H3.900a2.500 2.500 0 0 0-2.500 2.500v8.700a2.500 2.500 0 0 0 2.500 2.500h7.400a2.500 2.500 0 0 0 2.500-2.500v-3.200" fill="none" stroke="#3374e4" stroke-width="2" stroke-linecap="round"/><path d="M6.700 10.500L14.800 3l2.300 2.600-7.800 7.500zM6.400 11.200l2.400 2.400-3.800.6zM15.500 2.400l1.200-1.100 2.300 2.600-1.200 1.100z" fill="#3374e4"/></svg><svg class="abs" style="left:40px;top:2px" width="20" height="21" viewBox="0 0 20 21"><path d="M6.800 5.200H4a2.500 2.500 0 0 0-2.500 2.500v8.700a2.500 2.500 0 0 0 2.500 2.500h7.500a2.500 2.500 0 0 0 2.500-2.500v-3.200" fill="none" stroke="#3374e4" stroke-width="2" stroke-linecap="round"/><path d="M9 5.750h9.200M13.450 0.900v9.600" stroke="#3374e4" stroke-width="2.800" fill="none"/></svg></div>
<div class="c ac" style="left:68px;width:100px"><span style="letter-spacing:0.194px">31/01/2021</span></div>
<div class="c al" style="left:168px;width:121px"><span style="letter-spacing:0.109px">Sortie</span></div>
<div class="c al" style="left:289px;width:159px">ROS</div>
<div class="c al" style="left:448px;width:250px"><span style="letter-spacing:0.247px">Rose</span></div>
<div class="c al" style="left:698px;width:184px"><span style="letter-spacing:0.064px">LEDUC SARL</span></div>
<div class="c al" style="left:882px;width:300px"><span style="letter-spacing:0.069px">Facture client</span></div>
<div class="c al" style="left:1182px;width:100px"><span style="letter-spacing:0.326px">20</span></div>
<div class="c ar" style="left:1282px;width:122px"><span style="letter-spacing:0.161px">2,50</span></div>
<div class="c ar" style="left:1404px;width:140px"><span style="letter-spacing:0.194px">50,00</span></div>
</div>
<div class="gr" style="top:265px">
<div class="c" style="left:0;width:68px"><svg class="cb" style="left:5.150px;top:8.100px" viewBox="0 0 14 14"><rect x="1" y="1" width="12" height="12" rx="2.200" fill="#fff" stroke="#86848f" stroke-width="1.700"/></svg><svg class="abs" style="left:21px;top:2px" width="20" height="21" viewBox="0 0 20 21"><path d="M7.100 5.200H3.900a2.500 2.500 0 0 0-2.500 2.500v8.700a2.500 2.500 0 0 0 2.500 2.500h7.400a2.500 2.500 0 0 0 2.500-2.500v-3.200" fill="none" stroke="#3374e4" stroke-width="2" stroke-linecap="round"/><path d="M6.700 10.500L14.800 3l2.300 2.600-7.800 7.500zM6.400 11.200l2.400 2.400-3.800.6zM15.500 2.400l1.200-1.100 2.300 2.600-1.200 1.100z" fill="#3374e4"/></svg><svg class="abs" style="left:40px;top:2px" width="20" height="21" viewBox="0 0 20 21"><path d="M6.800 5.200H4a2.500 2.500 0 0 0-2.500 2.500v8.700a2.500 2.500 0 0 0 2.500 2.500h7.500a2.500 2.500 0 0 0 2.500-2.500v-3.200" fill="none" stroke="#3374e4" stroke-width="2" stroke-linecap="round"/><path d="M9 5.750h9.200M13.450 0.900v9.600" stroke="#3374e4" stroke-width="2.800" fill="none"/></svg></div>
<div class="c ac" style="left:68px;width:100px"><span style="letter-spacing:0.194px">31/01/2021</span></div>
<div class="c al" style="left:168px;width:121px"><span style="letter-spacing:0.109px">Sortie</span></div>
<div class="c al" style="left:289px;width:159px"><span style="letter-spacing:-0.114px">OLI</span></div>
<div class="c al" style="left:448px;width:250px"><span style="letter-spacing:0.037px">Olivier provençal</span></div>
<div class="c al" style="left:698px;width:184px"><span style="letter-spacing:0.064px">LEDUC SARL</span></div>
<div class="c al" style="left:882px;width:300px"><span style="letter-spacing:0.069px">Facture client</span></div>
<div class="c al" style="left:1182px;width:100px"><span style="letter-spacing:0.326px">3</span></div>
<div class="c ar" style="left:1282px;width:122px"><span style="letter-spacing:0.216px">250,00</span></div>
<div class="c ar" style="left:1404px;width:140px"><span style="letter-spacing:0.216px">750,00</span></div>
</div>
<div class="gr alt" style="top:294px">
<div class="c" style="left:0;width:68px"><svg class="cb" style="left:5.150px;top:8.100px" viewBox="0 0 14 14"><rect x="1" y="1" width="12" height="12" rx="2.200" fill="#fff" stroke="#86848f" stroke-width="1.700"/></svg><svg class="abs" style="left:21px;top:2px" width="20" height="21" viewBox="0 0 20 21"><path d="M7.100 5.200H3.900a2.500 2.500 0 0 0-2.500 2.500v8.700a2.500 2.500 0 0 0 2.500 2.500h7.400a2.500 2.500 0 0 0 2.500-2.500v-3.200" fill="none" stroke="#3374e4" stroke-width="2" stroke-linecap="round"/><path d="M6.700 10.500L14.800 3l2.300 2.600-7.800 7.500zM6.400 11.200l2.400 2.400-3.800.6zM15.500 2.400l1.200-1.100 2.300 2.600-1.200 1.100z" fill="#3374e4"/></svg><svg class="abs" style="left:40px;top:2px" width="20" height="21" viewBox="0 0 20 21"><path d="M6.800 5.200H4a2.500 2.500 0 0 0-2.500 2.500v8.700a2.500 2.500 0 0 0 2.500 2.500h7.500a2.500 2.500 0 0 0 2.500-2.500v-3.200" fill="none" stroke="#3374e4" stroke-width="2" stroke-linecap="round"/><path d="M9 5.750h9.200M13.450 0.900v9.600" stroke="#3374e4" stroke-width="2.800" fill="none"/></svg></div>
<div class="c ac" style="left:68px;width:100px"><span style="letter-spacing:0.194px">31/01/2021</span></div>
<div class="c al" style="left:168px;width:121px"><span style="letter-spacing:0.109px">Sortie</span></div>
<div class="c al" style="left:289px;width:159px"><span style="letter-spacing:-0.227px">LYS</span></div>
<div class="c al" style="left:448px;width:250px"><span style="letter-spacing:0.101px">Lys Saint Joseph</span></div>
<div class="c al" style="left:698px;width:184px"><span style="letter-spacing:-0.253px">LEROY SA</span></div>
<div class="c al" style="left:882px;width:300px"><span style="letter-spacing:0.069px">Facture client</span></div>
<div class="c al" style="left:1182px;width:100px"><span style="letter-spacing:0.326px">150</span></div>
<div class="c ar" style="left:1282px;width:122px"><span style="letter-spacing:0.161px">3,00</span></div>
<div class="c ar" style="left:1404px;width:140px"><span style="letter-spacing:0.216px">450,00</span></div>
</div>
<div class="gr" style="top:323px">
<div class="c" style="left:0;width:68px"><svg class="cb" style="left:5.150px;top:8.100px" viewBox="0 0 14 14"><rect x="1" y="1" width="12" height="12" rx="2.200" fill="#fff" stroke="#86848f" stroke-width="1.700"/></svg><svg class="abs" style="left:21px;top:2px" width="20" height="21" viewBox="0 0 20 21"><path d="M7.100 5.200H3.900a2.500 2.500 0 0 0-2.500 2.500v8.700a2.500 2.500 0 0 0 2.500 2.500h7.400a2.500 2.500 0 0 0 2.500-2.500v-3.200" fill="none" stroke="#3374e4" stroke-width="2" stroke-linecap="round"/><path d="M6.700 10.500L14.800 3l2.300 2.600-7.800 7.500zM6.400 11.200l2.400 2.400-3.800.6zM15.500 2.400l1.200-1.100 2.300 2.600-1.200 1.100z" fill="#3374e4"/></svg><svg class="abs" style="left:40px;top:2px" width="20" height="21" viewBox="0 0 20 21"><path d="M6.800 5.200H4a2.500 2.500 0 0 0-2.500 2.500v8.700a2.500 2.500 0 0 0 2.500 2.500h7.500a2.500 2.500 0 0 0 2.500-2.500v-3.200" fill="none" stroke="#3374e4" stroke-width="2" stroke-linecap="round"/><path d="M9 5.750h9.200M13.450 0.900v9.600" stroke="#3374e4" stroke-width="2.800" fill="none"/></svg></div>
<div class="c ac" style="left:68px;width:100px"><span style="letter-spacing:0.194px">31/01/2021</span></div>
<div class="c al" style="left:168px;width:121px"><span style="letter-spacing:0.109px">Sortie</span></div>
<div class="c al" style="left:289px;width:159px">ROS</div>
<div class="c al" style="left:448px;width:250px"><span style="letter-spacing:0.247px">Rose</span></div>
<div class="c al" style="left:698px;width:184px"><span style="letter-spacing:-0.253px">LEROY SA</span></div>
<div class="c al" style="left:882px;width:300px"><span style="letter-spacing:0.069px">Facture client</span></div>
<div class="c al" style="left:1182px;width:100px"><span style="letter-spacing:0.326px">20</span></div>
<div class="c ar" style="left:1282px;width:122px"><span style="letter-spacing:0.161px">2,50</span></div>
<div class="c ar" style="left:1404px;width:140px"><span style="letter-spacing:0.194px">50,00</span></div>
</div>
<div class="gr alt" style="top:352px">
<div class="c" style="left:0;width:68px"><svg class="cb" style="left:5.150px;top:8.100px" viewBox="0 0 14 14"><rect x="1" y="1" width="12" height="12" rx="2.200" fill="#fff" stroke="#86848f" stroke-width="1.700"/></svg><svg class="abs" style="left:21px;top:2px" width="20" height="21" viewBox="0 0 20 21"><path d="M7.100 5.200H3.900a2.500 2.500 0 0 0-2.500 2.500v8.700a2.500 2.500 0 0 0 2.500 2.500h7.400a2.500 2.500 0 0 0 2.500-2.500v-3.200" fill="none" stroke="#3374e4" stroke-width="2" stroke-linecap="round"/><path d="M6.700 10.500L14.800 3l2.300 2.600-7.800 7.500zM6.400 11.200l2.400 2.400-3.800.6zM15.500 2.400l1.200-1.100 2.300 2.600-1.200 1.100z" fill="#3374e4"/></svg><svg class="abs" style="left:40px;top:2px" width="20" height="21" viewBox="0 0 20 21"><path d="M6.800 5.200H4a2.500 2.500 0 0 0-2.500 2.500v8.700a2.500 2.500 0 0 0 2.500 2.500h7.500a2.500 2.500 0 0 0 2.500-2.500v-3.200" fill="none" stroke="#3374e4" stroke-width="2" stroke-linecap="round"/><path d="M9 5.750h9.200M13.450 0.900v9.600" stroke="#3374e4" stroke-width="2.800" fill="none"/></svg></div>
<div class="c ac" style="left:68px;width:100px"><span style="letter-spacing:0.194px">31/01/2021</span></div>
<div class="c al" style="left:168px;width:121px"><span style="letter-spacing:0.109px">Sortie</span></div>
<div class="c al" style="left:289px;width:159px"><span style="letter-spacing:-0.114px">OLI</span></div>
<div class="c al" style="left:448px;width:250px"><span style="letter-spacing:0.037px">Olivier provençal</span></div>
<div class="c al" style="left:698px;width:184px"><span style="letter-spacing:-0.253px">LEROY SA</span></div>
<div class="c al" style="left:882px;width:300px"><span style="letter-spacing:0.069px">Facture client</span></div>
<div class="c al" style="left:1182px;width:100px"><span style="letter-spacing:0.326px">4</span></div>
<div class="c ar" style="left:1282px;width:122px"><span style="letter-spacing:0.216px">250,00</span></div>
<div class="c ar" style="left:1404px;width:140px"><span style="letter-spacing:0.161px">1 000,00</span></div>
</div>
<div class="gr" style="top:381px">
<div class="c" style="left:0;width:68px"><svg class="cb" style="left:5.150px;top:8.100px" viewBox="0 0 14 14"><rect x="1" y="1" width="12" height="12" rx="2.200" fill="#fff" stroke="#86848f" stroke-width="1.700"/></svg><svg class="abs" style="left:21px;top:2px" width="20" height="21" viewBox="0 0 20 21"><path d="M7.100 5.200H3.900a2.500 2.500 0 0 0-2.500 2.500v8.700a2.500 2.500 0 0 0 2.500 2.500h7.400a2.500 2.500 0 0 0 2.500-2.500v-3.200" fill="none" stroke="#3374e4" stroke-width="2" stroke-linecap="round"/><path d="M6.700 10.500L14.800 3l2.300 2.600-7.800 7.500zM6.400 11.200l2.400 2.400-3.800.6zM15.500 2.400l1.200-1.100 2.300 2.600-1.200 1.100z" fill="#3374e4"/></svg><svg class="abs" style="left:40px;top:2px" width="20" height="21" viewBox="0 0 20 21"><path d="M6.800 5.200H4a2.500 2.500 0 0 0-2.500 2.500v8.700a2.500 2.500 0 0 0 2.500 2.500h7.500a2.500 2.500 0 0 0 2.500-2.500v-3.200" fill="none" stroke="#3374e4" stroke-width="2" stroke-linecap="round"/><path d="M9 5.750h9.200M13.450 0.900v9.600" stroke="#3374e4" stroke-width="2.800" fill="none"/></svg></div>
<div class="c ac" style="left:68px;width:100px"><span style="letter-spacing:0.194px">31/01/2021</span></div>
<div class="c al" style="left:168px;width:121px"><span style="letter-spacing:0.109px">Sortie</span></div>
<div class="c al" style="left:289px;width:159px"><span style="letter-spacing:-0.227px">LYS</span></div>
<div class="c al" style="left:448px;width:250px"><span style="letter-spacing:0.101px">Lys Saint Joseph</span></div>
<div class="c al" style="left:698px;width:184px"><span style="letter-spacing:-0.215px">LAREYNE SAS</span></div>
<div class="c al" style="left:882px;width:300px"><span style="letter-spacing:0.069px">Facture client</span></div>
<div class="c al" style="left:1182px;width:100px"><span style="letter-spacing:0.326px">50</span></div>
<div class="c ar" style="left:1282px;width:122px"><span style="letter-spacing:0.161px">3,00</span></div>
<div class="c ar" style="left:1404px;width:140px"><span style="letter-spacing:0.216px">150,00</span></div>
</div>
<div class="gr alt" style="top:410px">
<div class="c" style="left:0;width:68px"><svg class="cb" style="left:5.150px;top:8.100px" viewBox="0 0 14 14"><rect x="1" y="1" width="12" height="12" rx="2.200" fill="#fff" stroke="#86848f" stroke-width="1.700"/></svg><svg class="abs" style="left:21px;top:2px" width="20" height="21" viewBox="0 0 20 21"><path d="M7.100 5.200H3.900a2.500 2.500 0 0 0-2.500 2.500v8.700a2.500 2.500 0 0 0 2.500 2.500h7.400a2.500 2.500 0 0 0 2.500-2.500v-3.200" fill="none" stroke="#3374e4" stroke-width="2" stroke-linecap="round"/><path d="M6.700 10.500L14.800 3l2.300 2.600-7.800 7.500zM6.400 11.200l2.400 2.400-3.800.6zM15.500 2.400l1.200-1.100 2.300 2.600-1.200 1.100z" fill="#3374e4"/></svg><svg class="abs" style="left:40px;top:2px" width="20" height="21" viewBox="0 0 20 21"><path d="M6.800 5.200H4a2.500 2.500 0 0 0-2.500 2.500v8.700a2.500 2.500 0 0 0 2.500 2.500h7.500a2.500 2.500 0 0 0 2.500-2.500v-3.200" fill="none" stroke="#3374e4" stroke-width="2" stroke-linecap="round"/><path d="M9 5.750h9.200M13.450 0.900v9.600" stroke="#3374e4" stroke-width="2.800" fill="none"/></svg></div>
<div class="c ac" style="left:68px;width:100px"><span style="letter-spacing:0.194px">31/01/2021</span></div>
<div class="c al" style="left:168px;width:121px"><span style="letter-spacing:0.109px">Sortie</span></div>
<div class="c al" style="left:289px;width:159px">ROS</div>
<div class="c al" style="left:448px;width:250px"><span style="letter-spacing:0.247px">Rose</span></div>
<div class="c al" style="left:698px;width:184px"><span style="letter-spacing:-0.215px">LAREYNE SAS</span></div>
<div class="c al" style="left:882px;width:300px"><span style="letter-spacing:0.069px">Facture client</span></div>
<div class="c al" style="left:1182px;width:100px"><span style="letter-spacing:0.326px">50</span></div>
<div class="c ar" style="left:1282px;width:122px"><span style="letter-spacing:0.161px">2,50</span></div>
<div class="c ar" style="left:1404px;width:140px"><span style="letter-spacing:0.216px">125,00</span></div>
</div>
<div class="gr" style="top:439px">
<div class="c" style="left:0;width:68px"><svg class="cb" style="left:5.150px;top:8.100px" viewBox="0 0 14 14"><rect x="1" y="1" width="12" height="12" rx="2.200" fill="#fff" stroke="#86848f" stroke-width="1.700"/></svg><svg class="abs" style="left:21px;top:2px" width="20" height="21" viewBox="0 0 20 21"><path d="M7.100 5.200H3.900a2.500 2.500 0 0 0-2.500 2.500v8.700a2.500 2.500 0 0 0 2.500 2.500h7.400a2.500 2.500 0 0 0 2.500-2.500v-3.200" fill="none" stroke="#3374e4" stroke-width="2" stroke-linecap="round"/><path d="M6.700 10.500L14.800 3l2.300 2.600-7.800 7.500zM6.400 11.200l2.400 2.400-3.800.6zM15.500 2.400l1.200-1.100 2.300 2.600-1.200 1.100z" fill="#3374e4"/></svg><svg class="abs" style="left:40px;top:2px" width="20" height="21" viewBox="0 0 20 21"><path d="M6.800 5.200H4a2.500 2.500 0 0 0-2.500 2.500v8.700a2.500 2.500 0 0 0 2.500 2.500h7.500a2.500 2.500 0 0 0 2.500-2.500v-3.200" fill="none" stroke="#3374e4" stroke-width="2" stroke-linecap="round"/><path d="M9 5.750h9.200M13.450 0.900v9.600" stroke="#3374e4" stroke-width="2.800" fill="none"/></svg></div>
<div class="c ac" style="left:68px;width:100px"><span style="letter-spacing:0.194px">31/01/2021</span></div>
<div class="c al" style="left:168px;width:121px"><span style="letter-spacing:0.109px">Sortie</span></div>
<div class="c al" style="left:289px;width:159px"><span style="letter-spacing:-0.114px">OLI</span></div>
<div class="c al" style="left:448px;width:250px"><span style="letter-spacing:0.037px">Olivier provençal</span></div>
<div class="c al" style="left:698px;width:184px"><span style="letter-spacing:-0.215px">LAREYNE SAS</span></div>
<div class="c al" style="left:882px;width:300px"><span style="letter-spacing:0.069px">Facture client</span></div>
<div class="c al" style="left:1182px;width:100px"><span style="letter-spacing:0.326px">40</span></div>
<div class="c ar" style="left:1282px;width:122px"><span style="letter-spacing:0.216px">250,00</span></div>
<div class="c ar" style="left:1404px;width:140px"><span style="letter-spacing:0.179px">10 000,00</span></div>
</div>
<div class="gr alt" style="top:468px">
<div class="c" style="left:0;width:68px"><svg class="cb" style="left:5.150px;top:8.100px" viewBox="0 0 14 14"><rect x="1" y="1" width="12" height="12" rx="2.200" fill="#fff" stroke="#86848f" stroke-width="1.700"/></svg><svg class="abs" style="left:21px;top:2px" width="20" height="21" viewBox="0 0 20 21"><path d="M7.100 5.200H3.900a2.500 2.500 0 0 0-2.500 2.500v8.700a2.500 2.500 0 0 0 2.500 2.500h7.400a2.500 2.500 0 0 0 2.500-2.500v-3.200" fill="none" stroke="#3374e4" stroke-width="2" stroke-linecap="round"/><path d="M6.700 10.500L14.800 3l2.300 2.600-7.800 7.500zM6.400 11.200l2.400 2.400-3.800.6zM15.500 2.400l1.200-1.100 2.300 2.600-1.200 1.100z" fill="#3374e4"/></svg><svg class="abs" style="left:40px;top:2px" width="20" height="21" viewBox="0 0 20 21"><path d="M6.800 5.200H4a2.500 2.500 0 0 0-2.500 2.500v8.700a2.500 2.500 0 0 0 2.500 2.500h7.500a2.500 2.500 0 0 0 2.500-2.500v-3.200" fill="none" stroke="#3374e4" stroke-width="2" stroke-linecap="round"/><path d="M9 5.750h9.200M13.450 0.900v9.600" stroke="#3374e4" stroke-width="2.800" fill="none"/></svg></div>
<div class="c ac" style="left:68px;width:100px"><span style="letter-spacing:0.194px">31/01/2021</span></div>
<div class="c al" style="left:168px;width:121px"><span style="letter-spacing:0.109px">Sortie</span></div>
<div class="c al" style="left:289px;width:159px"><span style="letter-spacing:-0.227px">LYS</span></div>
<div class="c al" style="left:448px;width:250px"><span style="letter-spacing:0.101px">Lys Saint Joseph</span></div>
<div class="c al" style="left:698px;width:184px"><span style="letter-spacing:-0.058px">LE PRINCE SA</span></div>
<div class="c al" style="left:882px;width:300px"><span style="letter-spacing:0.069px">Facture client</span></div>
<div class="c al" style="left:1182px;width:100px"><span style="letter-spacing:0.326px">15</span></div>
<div class="c ar" style="left:1282px;width:122px"><span style="letter-spacing:0.161px">3,00</span></div>
<div class="c ar" style="left:1404px;width:140px"><span style="letter-spacing:0.194px">45,00</span></div>
</div>
<div class="gr" style="top:497px">
<div class="c" style="left:0;width:68px"><svg class="cb" style="left:5.150px;top:8.100px" viewBox="0 0 14 14"><rect x="1" y="1" width="12" height="12" rx="2.200" fill="#fff" stroke="#86848f" stroke-width="1.700"/></svg><svg class="abs" style="left:21px;top:2px" width="20" height="21" viewBox="0 0 20 21"><path d="M7.100 5.200H3.900a2.500 2.500 0 0 0-2.500 2.500v8.700a2.500 2.500 0 0 0 2.500 2.500h7.400a2.500 2.500 0 0 0 2.500-2.500v-3.200" fill="none" stroke="#3374e4" stroke-width="2" stroke-linecap="round"/><path d="M6.700 10.500L14.800 3l2.300 2.600-7.800 7.500zM6.400 11.200l2.400 2.400-3.800.6zM15.500 2.400l1.200-1.100 2.300 2.600-1.200 1.100z" fill="#3374e4"/></svg><svg class="abs" style="left:40px;top:2px" width="20" height="21" viewBox="0 0 20 21"><path d="M6.800 5.200H4a2.500 2.500 0 0 0-2.500 2.500v8.700a2.500 2.500 0 0 0 2.500 2.500h7.500a2.500 2.500 0 0 0 2.500-2.500v-3.200" fill="none" stroke="#3374e4" stroke-width="2" stroke-linecap="round"/><path d="M9 5.750h9.200M13.450 0.900v9.600" stroke="#3374e4" stroke-width="2.800" fill="none"/></svg></div>
<div class="c ac" style="left:68px;width:100px"><span style="letter-spacing:0.194px">31/01/2021</span></div>
<div class="c al" style="left:168px;width:121px"><span style="letter-spacing:0.109px">Sortie</span></div>
<div class="c al" style="left:289px;width:159px">ROS</div>
<div class="c al" style="left:448px;width:250px"><span style="letter-spacing:0.247px">Rose</span></div>
<div class="c al" style="left:698px;width:184px"><span style="letter-spacing:-0.058px">LE PRINCE SA</span></div>
<div class="c al" style="left:882px;width:300px"><span style="letter-spacing:0.069px">Facture client</span></div>
<div class="c al" style="left:1182px;width:100px"><span style="letter-spacing:0.326px">20</span></div>
<div class="c ar" style="left:1282px;width:122px"><span style="letter-spacing:0.161px">2,50</span></div>
<div class="c ar" style="left:1404px;width:140px"><span style="letter-spacing:0.194px">50,00</span></div>
</div>
<div class="gr alt" style="top:526px">
<div class="c" style="left:0;width:68px"><svg class="cb" style="left:5.150px;top:8.100px" viewBox="0 0 14 14"><rect x="1" y="1" width="12" height="12" rx="2.200" fill="#fff" stroke="#86848f" stroke-width="1.700"/></svg><svg class="abs" style="left:21px;top:2px" width="20" height="21" viewBox="0 0 20 21"><path d="M7.100 5.200H3.900a2.500 2.500 0 0 0-2.500 2.500v8.700a2.500 2.500 0 0 0 2.500 2.500h7.400a2.500 2.500 0 0 0 2.500-2.500v-3.200" fill="none" stroke="#3374e4" stroke-width="2" stroke-linecap="round"/><path d="M6.700 10.500L14.800 3l2.300 2.600-7.800 7.500zM6.400 11.200l2.400 2.400-3.800.6zM15.500 2.400l1.200-1.100 2.300 2.600-1.200 1.100z" fill="#3374e4"/></svg><svg class="abs" style="left:40px;top:2px" width="20" height="21" viewBox="0 0 20 21"><path d="M6.800 5.200H4a2.500 2.500 0 0 0-2.500 2.500v8.700a2.500 2.500 0 0 0 2.500 2.500h7.500a2.500 2.500 0 0 0 2.500-2.500v-3.200" fill="none" stroke="#3374e4" stroke-width="2" stroke-linecap="round"/><path d="M9 5.750h9.200M13.450 0.900v9.600" stroke="#3374e4" stroke-width="2.800" fill="none"/></svg></div>
<div class="c ac" style="left:68px;width:100px"><span style="letter-spacing:0.194px">31/01/2021</span></div>
<div class="c al" style="left:168px;width:121px"><span style="letter-spacing:0.109px">Sortie</span></div>
<div class="c al" style="left:289px;width:159px"><span style="letter-spacing:-0.114px">OLI</span></div>
<div class="c al" style="left:448px;width:250px"><span style="letter-spacing:0.037px">Olivier provençal</span></div>
<div class="c al" style="left:698px;width:184px"><span style="letter-spacing:-0.058px">LE PRINCE SA</span></div>
<div class="c al" style="left:882px;width:300px"><span style="letter-spacing:0.069px">Facture client</span></div>
<div class="c al" style="left:1182px;width:100px"><span style="letter-spacing:0.326px">40</span></div>
<div class="c ar" style="left:1282px;width:122px"><span style="letter-spacing:0.216px">250,00</span></div>
<div class="c ar" style="left:1404px;width:140px"><span style="letter-spacing:0.179px">10 000,00</span></div>
</div>
<div class="gr" style="top:555px">
<div class="c" style="left:0;width:68px"><svg class="cb" style="left:5.150px;top:8.100px" viewBox="0 0 14 14"><rect x="1" y="1" width="12" height="12" rx="2.200" fill="#fff" stroke="#86848f" stroke-width="1.700"/></svg><svg class="abs" style="left:21px;top:2px" width="20" height="21" viewBox="0 0 20 21"><path d="M7.100 5.200H3.900a2.500 2.500 0 0 0-2.500 2.500v8.700a2.500 2.500 0 0 0 2.500 2.500h7.400a2.500 2.500 0 0 0 2.500-2.500v-3.200" fill="none" stroke="#3374e4" stroke-width="2" stroke-linecap="round"/><path d="M6.700 10.500L14.800 3l2.300 2.600-7.800 7.500zM6.400 11.200l2.400 2.400-3.800.6zM15.500 2.400l1.200-1.100 2.300 2.600-1.200 1.100z" fill="#3374e4"/></svg><svg class="abs" style="left:40px;top:2px" width="20" height="21" viewBox="0 0 20 21"><path d="M6.800 5.200H4a2.500 2.500 0 0 0-2.500 2.500v8.700a2.500 2.500 0 0 0 2.500 2.500h7.500a2.500 2.500 0 0 0 2.500-2.500v-3.200" fill="none" stroke="#3374e4" stroke-width="2" stroke-linecap="round"/><path d="M9 5.750h9.200M13.450 0.900v9.600" stroke="#3374e4" stroke-width="2.800" fill="none"/></svg></div>
<div class="c ac" style="left:68px;width:100px"><span style="letter-spacing:0.194px">31/01/2021</span></div>
<div class="c al" style="left:168px;width:121px"><span style="letter-spacing:0.109px">Sortie</span></div>
<div class="c al" style="left:289px;width:159px"><span style="letter-spacing:-0.227px">LYS</span></div>
<div class="c al" style="left:448px;width:250px"><span style="letter-spacing:0.101px">Lys Saint Joseph</span></div>
<div class="c al" style="left:698px;width:184px"><span style="letter-spacing:-0.218px">ARBRE A PAIN SARL</span></div>
<div class="c al" style="left:882px;width:300px"><span style="letter-spacing:0.069px">Facture client</span></div>
<div class="c al" style="left:1182px;width:100px"><span style="letter-spacing:0.326px">25</span></div>
<div class="c ar" style="left:1282px;width:122px"><span style="letter-spacing:0.161px">3,00</span></div>
<div class="c ar" style="left:1404px;width:140px"><span style="letter-spacing:0.194px">75,00</span></div>
</div>
<div class="gr alt" style="top:584px">
<div class="c" style="left:0;width:68px"><svg class="cb" style="left:5.150px;top:8.100px" viewBox="0 0 14 14"><rect x="1" y="1" width="12" height="12" rx="2.200" fill="#fff" stroke="#86848f" stroke-width="1.700"/></svg><svg class="abs" style="left:21px;top:2px" width="20" height="21" viewBox="0 0 20 21"><path d="M7.100 5.200H3.900a2.500 2.500 0 0 0-2.500 2.500v8.700a2.500 2.500 0 0 0 2.500 2.500h7.400a2.500 2.500 0 0 0 2.500-2.500v-3.200" fill="none" stroke="#3374e4" stroke-width="2" stroke-linecap="round"/><path d="M6.700 10.500L14.800 3l2.300 2.600-7.800 7.500zM6.400 11.200l2.400 2.400-3.800.6zM15.500 2.400l1.200-1.100 2.300 2.600-1.200 1.100z" fill="#3374e4"/></svg><svg class="abs" style="left:40px;top:2px" width="20" height="21" viewBox="0 0 20 21"><path d="M6.800 5.200H4a2.500 2.500 0 0 0-2.500 2.500v8.700a2.500 2.500 0 0 0 2.500 2.500h7.500a2.500 2.500 0 0 0 2.500-2.500v-3.200" fill="none" stroke="#3374e4" stroke-width="2" stroke-linecap="round"/><path d="M9 5.750h9.200M13.450 0.900v9.600" stroke="#3374e4" stroke-width="2.800" fill="none"/></svg></div>
<div class="c ac" style="left:68px;width:100px"><span style="letter-spacing:0.194px">31/01/2021</span></div>
<div class="c al" style="left:168px;width:121px"><span style="letter-spacing:0.109px">Sortie</span></div>
<div class="c al" style="left:289px;width:159px">ROS</div>
<div class="c al" style="left:448px;width:250px"><span style="letter-spacing:0.247px">Rose</span></div>
<div class="c al" style="left:698px;width:184px"><span style="letter-spacing:-0.218px">ARBRE A PAIN SARL</span></div>
<div class="c al" style="left:882px;width:300px"><span style="letter-spacing:0.069px">Facture client</span></div>
<div class="c al" style="left:1182px;width:100px"><span style="letter-spacing:0.326px">40</span></div>
<div class="c ar" style="left:1282px;width:122px"><span style="letter-spacing:0.161px">2,50</span></div>
<div class="c ar" style="left:1404px;width:140px"><span style="letter-spacing:0.216px">100,00</span></div>
</div>
<div class="gr" style="top:613px">
<div class="c" style="left:0;width:68px"><svg class="cb" style="left:5.150px;top:8.100px" viewBox="0 0 14 14"><rect x="1" y="1" width="12" height="12" rx="2.200" fill="#fff" stroke="#86848f" stroke-width="1.700"/></svg><svg class="abs" style="left:21px;top:2px" width="20" height="21" viewBox="0 0 20 21"><path d="M7.100 5.200H3.900a2.500 2.500 0 0 0-2.500 2.500v8.700a2.500 2.500 0 0 0 2.500 2.500h7.400a2.500 2.500 0 0 0 2.500-2.500v-3.200" fill="none" stroke="#3374e4" stroke-width="2" stroke-linecap="round"/><path d="M6.700 10.500L14.800 3l2.300 2.600-7.800 7.500zM6.400 11.200l2.400 2.400-3.800.6zM15.500 2.400l1.200-1.100 2.300 2.600-1.200 1.100z" fill="#3374e4"/></svg><svg class="abs" style="left:40px;top:2px" width="20" height="21" viewBox="0 0 20 21"><path d="M6.800 5.200H4a2.500 2.500 0 0 0-2.500 2.500v8.700a2.500 2.500 0 0 0 2.500 2.500h7.500a2.500 2.500 0 0 0 2.500-2.500v-3.200" fill="none" stroke="#3374e4" stroke-width="2" stroke-linecap="round"/><path d="M9 5.750h9.200M13.450 0.900v9.600" stroke="#3374e4" stroke-width="2.800" fill="none"/></svg></div>
<div class="c ac" style="left:68px;width:100px"><span style="letter-spacing:0.194px">31/01/2021</span></div>
<div class="c al" style="left:168px;width:121px"><span style="letter-spacing:0.109px">Sortie</span></div>
<div class="c al" style="left:289px;width:159px"><span style="letter-spacing:-0.114px">OLI</span></div>
<div class="c al" style="left:448px;width:250px"><span style="letter-spacing:0.037px">Olivier provençal</span></div>
<div class="c al" style="left:698px;width:184px"><span style="letter-spacing:-0.218px">ARBRE A PAIN SARL</span></div>
<div class="c al" style="left:882px;width:300px"><span style="letter-spacing:0.069px">Facture client</span></div>
<div class="c al" style="left:1182px;width:100px"><span style="letter-spacing:0.326px">12</span></div>
<div class="c ar" style="left:1282px;width:122px"><span style="letter-spacing:0.216px">250,00</span></div>
<div class="c ar" style="left:1404px;width:140px"><span style="letter-spacing:0.161px">3 000,00</span></div>
</div>
<div class="gr alt" style="top:642px">
<div class="c" style="left:0;width:68px"><svg class="cb" style="left:5.150px;top:8.100px" viewBox="0 0 14 14"><rect x="1" y="1" width="12" height="12" rx="2.200" fill="#fff" stroke="#86848f" stroke-width="1.700"/></svg><svg class="abs" style="left:21px;top:2px" width="20" height="21" viewBox="0 0 20 21"><path d="M7.100 5.200H3.900a2.500 2.500 0 0 0-2.500 2.500v8.700a2.500 2.500 0 0 0 2.500 2.500h7.400a2.500 2.500 0 0 0 2.500-2.500v-3.200" fill="none" stroke="#3374e4" stroke-width="2" stroke-linecap="round"/><path d="M6.700 10.500L14.800 3l2.300 2.600-7.800 7.500zM6.400 11.200l2.400 2.400-3.800.6zM15.500 2.400l1.200-1.100 2.300 2.600-1.200 1.100z" fill="#3374e4"/></svg><svg class="abs" style="left:40px;top:2px" width="20" height="21" viewBox="0 0 20 21"><path d="M6.800 5.200H4a2.500 2.500 0 0 0-2.500 2.500v8.700a2.500 2.500 0 0 0 2.500 2.500h7.500a2.500 2.500 0 0 0 2.500-2.500v-3.200" fill="none" stroke="#3374e4" stroke-width="2" stroke-linecap="round"/><path d="M9 5.750h9.200M13.450 0.900v9.600" stroke="#3374e4" stroke-width="2.800" fill="none"/></svg></div>
<div class="c ac" style="left:68px;width:100px"><span style="letter-spacing:0.194px">31/01/2021</span></div>
<div class="c al" style="left:168px;width:121px"><span style="letter-spacing:0.109px">Sortie</span></div>
<div class="c al" style="left:289px;width:159px"><span style="letter-spacing:-0.227px">LYS</span></div>
<div class="c al" style="left:448px;width:250px"><span style="letter-spacing:0.101px">Lys Saint Joseph</span></div>
<div class="c al" style="left:698px;width:184px"><span style="letter-spacing:-0.142px">MIGNON REVELLI SARL</span></div>
<div class="c al" style="left:882px;width:300px"><span style="letter-spacing:0.069px">Facture client</span></div>
<div class="c al" style="left:1182px;width:100px"><span style="letter-spacing:0.326px">15</span></div>
<div class="c ar" style="left:1282px;width:122px"><span style="letter-spacing:0.161px">3,00</span></div>
<div class="c ar" style="left:1404px;width:140px"><span style="letter-spacing:0.194px">45,00</span></div>
</div>
<div class="gr" style="top:671px">
<div class="c" style="left:0;width:68px"><svg class="cb" style="left:5.150px;top:8.100px" viewBox="0 0 14 14"><rect x="1" y="1" width="12" height="12" rx="2.200" fill="#fff" stroke="#86848f" stroke-width="1.700"/></svg><svg class="abs" style="left:21px;top:2px" width="20" height="21" viewBox="0 0 20 21"><path d="M7.100 5.200H3.900a2.500 2.500 0 0 0-2.500 2.500v8.700a2.500 2.500 0 0 0 2.500 2.500h7.400a2.500 2.500 0 0 0 2.500-2.500v-3.200" fill="none" stroke="#3374e4" stroke-width="2" stroke-linecap="round"/><path d="M6.700 10.500L14.800 3l2.300 2.600-7.800 7.500zM6.400 11.200l2.400 2.400-3.800.6zM15.500 2.400l1.200-1.100 2.300 2.600-1.200 1.100z" fill="#3374e4"/></svg><svg class="abs" style="left:40px;top:2px" width="20" height="21" viewBox="0 0 20 21"><path d="M6.800 5.200H4a2.500 2.500 0 0 0-2.500 2.500v8.700a2.500 2.500 0 0 0 2.500 2.500h7.500a2.500 2.500 0 0 0 2.500-2.500v-3.200" fill="none" stroke="#3374e4" stroke-width="2" stroke-linecap="round"/><path d="M9 5.750h9.200M13.450 0.900v9.600" stroke="#3374e4" stroke-width="2.800" fill="none"/></svg></div>
<div class="c ac" style="left:68px;width:100px"><span style="letter-spacing:0.194px">31/01/2021</span></div>
<div class="c al" style="left:168px;width:121px"><span style="letter-spacing:0.109px">Sortie</span></div>
<div class="c al" style="left:289px;width:159px">ROS</div>
<div class="c al" style="left:448px;width:250px"><span style="letter-spacing:0.247px">Rose</span></div>
<div class="c al" style="left:698px;width:184px"><span style="letter-spacing:-0.142px">MIGNON REVELLI SARL</span></div>
<div class="c al" style="left:882px;width:300px"><span style="letter-spacing:0.069px">Facture client</span></div>
<div class="c al" style="left:1182px;width:100px"><span style="letter-spacing:0.326px">10</span></div>
<div class="c ar" style="left:1282px;width:122px"><span style="letter-spacing:0.161px">2,50</span></div>
<div class="c ar" style="left:1404px;width:140px"><span style="letter-spacing:0.194px">25,00</span></div>
</div>
<div class="gr alt" style="top:700px">
<div class="c" style="left:0;width:68px"><svg class="cb" style="left:5.150px;top:8.100px" viewBox="0 0 14 14"><rect x="1" y="1" width="12" height="12" rx="2.200" fill="#fff" stroke="#86848f" stroke-width="1.700"/></svg><svg class="abs" style="left:21px;top:2px" width="20" height="21" viewBox="0 0 20 21"><path d="M7.100 5.200H3.900a2.500 2.500 0 0 0-2.500 2.500v8.700a2.500 2.500 0 0 0 2.500 2.500h7.400a2.500 2.500 0 0 0 2.500-2.500v-3.200" fill="none" stroke="#3374e4" stroke-width="2" stroke-linecap="round"/><path d="M6.700 10.500L14.800 3l2.300 2.600-7.800 7.500zM6.400 11.200l2.400 2.400-3.800.6zM15.500 2.400l1.200-1.100 2.300 2.600-1.200 1.100z" fill="#3374e4"/></svg><svg class="abs" style="left:40px;top:2px" width="20" height="21" viewBox="0 0 20 21"><path d="M6.800 5.200H4a2.500 2.500 0 0 0-2.500 2.500v8.700a2.500 2.500 0 0 0 2.500 2.500h7.500a2.500 2.500 0 0 0 2.500-2.500v-3.200" fill="none" stroke="#3374e4" stroke-width="2" stroke-linecap="round"/><path d="M9 5.750h9.200M13.450 0.900v9.600" stroke="#3374e4" stroke-width="2.800" fill="none"/></svg></div>
<div class="c ac" style="left:68px;width:100px"><span style="letter-spacing:0.194px">31/01/2021</span></div>
<div class="c al" style="left:168px;width:121px"><span style="letter-spacing:0.109px">Sortie</span></div>
<div class="c al" style="left:289px;width:159px"><span style="letter-spacing:-0.114px">OLI</span></div>
<div class="c al" style="left:448px;width:250px"><span style="letter-spacing:0.037px">Olivier provençal</span></div>
<div class="c al" style="left:698px;width:184px"><span style="letter-spacing:-0.142px">MIGNON REVELLI SARL</span></div>
<div class="c al" style="left:882px;width:300px"><span style="letter-spacing:0.069px">Facture client</span></div>
<div class="c al" style="left:1182px;width:100px"><span style="letter-spacing:0.326px">20</span></div>
<div class="c ar" style="left:1282px;width:122px"><span style="letter-spacing:0.216px">250,00</span></div>
<div class="c ar" style="left:1404px;width:140px"><span style="letter-spacing:0.161px">5 000,00</span></div>
</div>
<div class="gr" style="top:729px">
<div class="c" style="left:0;width:68px"><svg class="cb" style="left:5.150px;top:8.100px" viewBox="0 0 14 14"><rect x="1" y="1" width="12" height="12" rx="2.200" fill="#fff" stroke="#86848f" stroke-width="1.700"/></svg><svg class="abs" style="left:21px;top:2px" width="20" height="21" viewBox="0 0 20 21"><path d="M7.100 5.200H3.900a2.500 2.500 0 0 0-2.500 2.500v8.700a2.500 2.500 0 0 0 2.500 2.500h7.400a2.500 2.500 0 0 0 2.500-2.500v-3.200" fill="none" stroke="#3374e4" stroke-width="2" stroke-linecap="round"/><path d="M6.700 10.500L14.800 3l2.300 2.600-7.800 7.500zM6.400 11.200l2.400 2.400-3.800.6zM15.500 2.400l1.200-1.100 2.300 2.600-1.200 1.100z" fill="#3374e4"/></svg><svg class="abs" style="left:40px;top:2px" width="20" height="21" viewBox="0 0 20 21"><path d="M6.800 5.200H4a2.500 2.500 0 0 0-2.500 2.500v8.700a2.500 2.500 0 0 0 2.500 2.500h7.500a2.500 2.500 0 0 0 2.500-2.500v-3.200" fill="none" stroke="#3374e4" stroke-width="2" stroke-linecap="round"/><path d="M9 5.750h9.200M13.450 0.900v9.600" stroke="#3374e4" stroke-width="2.800" fill="none"/></svg></div>
<div class="c ac" style="left:68px;width:100px"><span style="letter-spacing:0.194px">28/02/2021</span></div>
<div class="c al" style="left:168px;width:121px"><span style="letter-spacing:0.109px">Sortie</span></div>
<div class="c al" style="left:289px;width:159px"><span style="letter-spacing:-0.227px">LYS</span></div>
<div class="c al" style="left:448px;width:250px"><span style="letter-spacing:0.101px">Lys Saint Joseph</span></div>
<div class="c al" style="left:698px;width:184px"><span style="letter-spacing:0.064px">LEDUC SARL</span></div>
<div class="c al" style="left:882px;width:300px"><span style="letter-spacing:0.069px">Facture client</span></div>
<div class="c al" style="left:1182px;width:100px"><span style="letter-spacing:0.326px">50</span></div>
<div class="c ar" style="left:1282px;width:122px"><span style="letter-spacing:0.161px">3,00</span></div>
<div class="c ar" style="left:1404px;width:140px"><span style="letter-spacing:0.216px">150,00</span></div>
</div>
<div class="gr alt" style="top:758px">
<div class="c" style="left:0;width:68px"><svg class="cb" style="left:5.150px;top:8.100px" viewBox="0 0 14 14"><rect x="1" y="1" width="12" height="12" rx="2.200" fill="#fff" stroke="#86848f" stroke-width="1.700"/></svg><svg class="abs" style="left:21px;top:2px" width="20" height="21" viewBox="0 0 20 21"><path d="M7.100 5.200H3.900a2.500 2.500 0 0 0-2.500 2.500v8.700a2.500 2.500 0 0 0 2.500 2.500h7.400a2.500 2.500 0 0 0 2.500-2.500v-3.200" fill="none" stroke="#3374e4" stroke-width="2" stroke-linecap="round"/><path d="M6.700 10.500L14.800 3l2.300 2.600-7.800 7.500zM6.400 11.200l2.400 2.400-3.800.6zM15.500 2.400l1.200-1.100 2.300 2.600-1.200 1.100z" fill="#3374e4"/></svg><svg class="abs" style="left:40px;top:2px" width="20" height="21" viewBox="0 0 20 21"><path d="M6.800 5.200H4a2.500 2.500 0 0 0-2.500 2.500v8.700a2.500 2.500 0 0 0 2.500 2.500h7.500a2.500 2.500 0 0 0 2.500-2.500v-3.200" fill="none" stroke="#3374e4" stroke-width="2" stroke-linecap="round"/><path d="M9 5.750h9.200M13.450 0.900v9.600" stroke="#3374e4" stroke-width="2.800" fill="none"/></svg></div>
<div class="c ac" style="left:68px;width:100px"><span style="letter-spacing:0.194px">28/02/2021</span></div>
<div class="c al" style="left:168px;width:121px"><span style="letter-spacing:0.109px">Sortie</span></div>
<div class="c al" style="left:289px;width:159px">ROS</div>
<div class="c al" style="left:448px;width:250px"><span style="letter-spacing:0.247px">Rose</span></div>
<div class="c al" style="left:698px;width:184px"><span style="letter-spacing:0.064px">LEDUC SARL</span></div>
<div class="c al" style="left:882px;width:300px"><span style="letter-spacing:0.069px">Facture client</span></div>
<div class="c al" style="left:1182px;width:100px"><span style="letter-spacing:0.326px">10</span></div>
<div class="c ar" style="left:1282px;width:122px"><span style="letter-spacing:0.161px">2,50</span></div>
<div class="c ar" style="left:1404px;width:140px"><span style="letter-spacing:0.194px">25,00</span></div>
</div>
<div id="pager">
<div class="p" style="left:12px;top:1px;opacity:.6">1</div>
<svg style="left:37px;top:11px" width="24" height="11" viewBox="0 0 24 11"><path d="M7.500 0.500v10L0.500 5.500zM14.500 0.500v10L7.500 5.500zM21.500 0.500v10L14.500 5.500z" fill="#3374e4" fill-opacity=".55"/></svg>
<svg style="left:73px;top:11px" width="17" height="11" viewBox="0 0 17 11"><path d="M7.500 0.500v10L0.500 5.500zM15.500 0.500v10L8.500 5.500z" fill="#3374e4" fill-opacity=".55"/></svg>
<svg style="left:110px;top:11px" width="10" height="11" viewBox="0 0 10 11"><path d="M8.500 0.500v10L0.500 5.500z" fill="#3374e4" fill-opacity=".55"/></svg>
<div class="abs" style="left:133px;top:1px;width:28px;height:27px;background:#fff;color:#000;text-align:right;padding-right:1.500px;line-height:26px">1</div>
<svg style="left:175px;top:9.600px" width="10" height="11" viewBox="0 0 10 11"><path d="M0.500 0.500v10L9.500 5.500z" fill="#3374e4"/></svg>
<svg style="left:204px;top:9.700px" width="17" height="11" viewBox="0 0 17 11"><path d="M1 0.500v10L8 5.500zM9 0.500v10L16 5.500z" fill="#3374e4" fill-opacity=".55"/></svg>
<svg style="left:235px;top:9.700px" width="24" height="11" viewBox="0 0 24 11"><path d="M0.500 0.500v10L7.500 5.500zM7.500 0.500v10L14.500 5.500zM14.500 0.500v10L21.500 5.500z" fill="#3374e4" fill-opacity=".55"/></svg>
<div class="p" style="left:278px;top:1px">3</div>
<div class="p" style="right:6px;top:3px;font-size:12px;opacity:.9;letter-spacing:.1px">1 à 26 sur 78</div>
</div>

</div><div id="sb2"><svg class="abs" style="left:3.500px;top:5px" width="10" height="8" viewBox="0 0 10 8"><path d="M1 6L5 1.500 9 6" fill="none" stroke="#505050" stroke-width="2"/></svg><div class="thumb" style="top:23px;height:858px"></div><svg class="abs" style="left:3.500px;top:886px" width="10" height="8" viewBox="0 0 10 8"><path d="M1 1.500L5 6 9 1.500" fill="none" stroke="#505050" stroke-width="2"/></svg></div>
<div class="hr" style="left:29px;top:1038px;width:1845px"></div>
<div class="btn-new">Nouveau</div>
<div id="sb1"><svg class="abs" style="left:3.500px;top:4.500px" width="10" height="8" viewBox="0 0 10 8"><path d="M1 6L5 1.500 9 6" fill="none" stroke="#505050" stroke-width="2"/></svg><div class="thumb" style="top:34px;height:1029px"></div><svg class="abs" style="left:3.500px;top:1068px" width="10" height="8" viewBox="0 0 10 8"><path d="M1 1.500L5 6 9 1.500" fill="none" stroke="#505050" stroke-width="2"/></svg></div>

</div>
</body></html>
